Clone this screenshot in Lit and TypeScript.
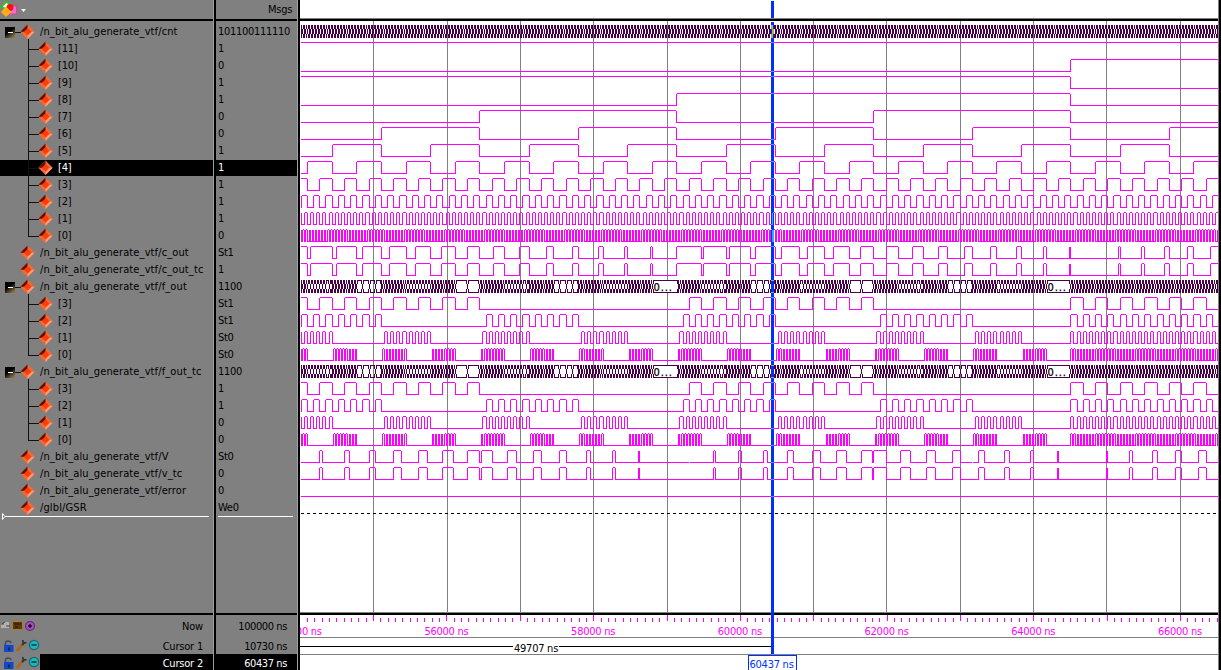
import { LitElement, html, svg, css } from "lit";
import { customElement } from "lit/decorators.js";

type Kind = "bus" | "bit" | "flat" | "undriven";
interface Signal {
  name: string;
  value: string;
  depth: 0 | 1;
  kind: Kind;
  fn?: (n: number) => number;
  last?: boolean;
  selected?: boolean;
}

const ROW = 17;
const ROWS_TOP = 24;
const X_MIN = 301;
const X_MAX = 1218;
const N_START = 2570;
const N_END = 3170;

/** Pixel column at which the counter takes value n. */
const col = (n: number) => Math.floor(1070.86 + (n - 3072) * 1.539);

const signed = (v: number) => (v > 7 ? v - 16 : v);
const split = (n: number) => ({ op: n >> 8, a: (n >> 4) & 15, b: n & 15 });

const fOut = (n: number) => {
  const { op, a, b } = split(n);
  return op === 12 ? ~b & 15 : ~a & b & 15;
};
const carry = (n: number) => {
  const { op, a, b } = split(n);
  if (op === 12) return a + b > 15 ? 1 : 0;
  if (op === 11) return a === 0 || b >= a ? 1 : 0;
  return a === 0 || b > a ? 1 : 0;
};
const overflow = (n: number) => {
  const { op, a, b } = split(n);
  const sa = signed(a);
  const sb = signed(b);
  const r = op === 12 ? sa + sb : op === 11 ? sa - sb - 1 : sa - sb;
  return r > 7 || r < -8 ? 1 : 0;
};
const bit = (f: (n: number) => number, i: number) => (n: number) => (f(n) >> i) & 1;

const T = "/n_bit_alu_generate_vtf/";
const group = (
  name: string,
  value: string,
  fn: (n: number) => number,
  vals: string[],
  selected = -1
): Signal[] => [
  { name: T + name, value, depth: 0, kind: "bus", fn },
  ...vals.map((v, k): Signal => {
    const i = vals.length - 1 - k;
    return {
      name: `[${i}]`, value: v, depth: 1, kind: "bit",
      fn: bit(fn, i), last: i === 0, selected: i === selected,
    };
  }),
];

const SIGNALS: Signal[] = [
  ...group("cnt", "101100111110", (n) => n, ["1", "0", "1", "1", "0", "0", "1", "1", "1", "1", "1", "0"], 4),
  { name: T + "c_out", value: "St1", depth: 0, kind: "bit", fn: carry },
  { name: T + "c_out_tc", value: "1", depth: 0, kind: "bit", fn: carry },
  ...group("f_out", "1100", fOut, ["St1", "St1", "St0", "St0"]),
  ...group("f_out_tc", "1100", fOut, ["1", "1", "0", "0"]),
  { name: T + "V", value: "St0", depth: 0, kind: "bit", fn: overflow },
  { name: T + "v_tc", value: "0", depth: 0, kind: "bit", fn: overflow },
  { name: T + "error", value: "0", depth: 0, kind: "flat" },
  { name: "/glbl/GSR", value: "We0", depth: 0, kind: "undriven" },
];

const changes = (fn: (n: number) => number) => {
  const out: { x: number; v: number }[] = [];
  let prev = fn(N_START);
  for (let n = N_START + 1; n < N_END; n++) {
    const v = fn(n);
    if (v !== prev) {
      out.push({ x: col(n), v });
      prev = v;
    }
  }
  return out;
};

const bitPath = (s: Signal, top: number) => {
  const hi = top + 1;
  const lo = top + 13;
  let d = "";
  let x = X_MIN;
  let v = s.fn!(N_START);
  const run = (from: number, to: number, level: number) => {
    if (to <= from) return;
    d += `M${from} ${(level ? hi : lo) + 0.5}H${to}`;
  };
  for (const c of changes(s.fn!)) {
    if (c.x < X_MIN) { v = c.v; continue; }
    if (c.x >= X_MAX) break;
    run(x, c.x, v);
    d += `M${c.x + 0.5} ${hi + 1}V${lo + 1}`;
    x = c.x + 1;
    v = c.v;
  }
  run(x, X_MAX, v);
  return d;
};

const busPath = (s: Signal, top: number) => {
  const H = 13;
  const W = X_MAX - X_MIN;
  const g: boolean[][] = Array.from({ length: W }, () =>
    Array.from({ length: H }, (_, r) => r === 0 || r === H - 1)
  );
  for (const c of changes(s.fn!)) {
    const x = c.x - X_MIN;
    for (const nx of [x - 1, x + 1]) {
      if (!g[nx]) continue;
      for (let r = 0; r < H; r++) if (r < 4 || r > 8) g[nx][r] = true;
    }
    if (g[x]) for (let r = 0; r < H; r++) g[x][r] = r > 3 && r < 9;
  }
  let d = "";
  g.forEach((column, i) => {
    let start = -1;
    for (let r = 0; r <= H; r++) {
      if (r < H && column[r]) { if (start < 0) start = r; }
      else if (start >= 0) {
        d += `M${X_MIN + i + 0.5} ${top + 1 + start}V${top + 1 + r}`;
        start = -1;
      }
    }
  });
  return d;
};

const GRID = [373, 447, 520, 593, 667, 740, 813, 886, 960, 1033, 1106, 1180];

@customElement("signal-mark")
class SignalMark extends LitElement {
  static properties = { depth: { type: Number }, bus: { type: Boolean }, last: { type: Boolean } };
  declare depth: number;
  declare bus: boolean;
  declare last: boolean;
  static styles = css`
    :host { display: block; flex: none; height: 17px; }
    svg { display: block; }
  `;
  render() {
    const cx = this.depth ? 45.5 : 27.5;
    return html`<svg width=${this.depth ? 58 : 40} height="17">
      ${this.bus
        ? svg`<defs><linearGradient id="g" x1="0" y1="0" x2="0.7" y2="1">
            <stop offset="0.45" stop-color="#000"/><stop offset="1" stop-color="#8a7448"/></linearGradient></defs>
            <path d="M15 8.5H21M28.5 15V17" stroke="#111" shape-rendering="crispEdges"/>
            <rect x="5" y="3" width="10" height="11" fill="url(#g)"/>
            <rect x="8" y="8" width="5" height="1" fill="#fff"/>`
        : null}
      ${this.depth
        ? svg`<path d="M28.5 0V${this.last ? 9 : 17}M28 8.5H39" stroke="#111" fill="none" shape-rendering="crispEdges"/>`
        : null}
      <g transform="translate(${cx} 7.7)">
        <path d="M0 -7.2L7.2 0L0 7.2L-7.2 0Z" fill="#f26a30"/>
        <path d="M0 -7.2V0H-7.2Z" fill="#591208"/>
        <path d="M7.2 0L0 7.2V0Z" fill="#ff9c78"/>
        <path d="M0.2 -3.8L4 0L0.2 3.8L-3.6 0Z" fill="#ff3a0c"/>
      </g>
    </svg>`;
  }
}

@customElement("wave-canvas")
class WaveCanvas extends LitElement {
  static styles = css`
    :host { display: block; width: 921px; height: 670px; background: #fff; }
    svg { display: block; }
    .px { shape-rendering: crispEdges; fill: none; }
    text { font: 11px "DejaVu Sans Condensed", "DejaVu Sans", sans-serif; font-stretch: condensed; }
  `;
  render() {
    const bits: string[] = [];
    const buses: string[] = [];
    SIGNALS.forEach((s, i) => {
      const top = ROWS_TOP + i * ROW;
      if (s.kind === "bit") bits.push(bitPath(s, top));
      if (s.kind === "flat") bits.push(`M${X_MIN} ${top + 13.5}H${X_MAX}`);
      if (s.kind === "bus") buses.push(busPath(s, top));
    });
    const bitD = bits.join("");
    const busD = buses.join("");
    const ticks: string[] = [];
    for (let k = -60; k <= 66; k++) {
      const x = Math.floor(740.4 + k * 7.336);
      if (x >= X_MIN && x < X_MAX) ticks.push(`M${x + 0.5} ${k % 10 ? 618 : 615}V${k % 10 ? 622 : 621}`);
    }
    const labels = [0, 1, 2, 3, 4, 5, 6].map((k) => ({ x: 299.7 + k * 146.7, t: `${54000 + k * 2000} ns` }));
    return html`<svg width="921" height="670" viewBox="300 0 921 670">
      <defs>
        <clipPath id="cur"><rect x="771" y="22" width="3" height="632"/></clipPath>
      </defs>
      <path class="px" stroke="#808080" d=${GRID.map((x) => `M${x + 0.5} 21V612`).join("")}></path>
      ${[279, 364].map((y) => [653, 1047].map((x) => svg`
        <rect x=${x} y=${y + 1} width=${x === 653 ? 24 : 22} height="12" fill="#fff"/>
        <text x=${x + 0.5} y=${y + 12} fill="#000" stroke="#000" stroke-width="0.25" textLength="18">0...</text>`))}
      <path class="px" stroke="#ff00ff" d=${bitD}></path>
      <path class="px" stroke="#fff" d="M689.5 462V463M972.5 462V463"></path>
      <path class="px" stroke="#480048" d=${busD}></path>
      <path class="px" stroke="#000" stroke-dasharray="3 3" d="M301 513.5H1218"></path>
      <rect x="300" y="18" width="918" height="1" fill="#808080"/>
      <rect x="300" y="19" width="918" height="2" fill="#000"/>
      <rect x="300" y="612" width="918" height="1" fill="#808080"/>
      <rect x="300" y="613" width="918" height="2" fill="#000"/>
      <path class="px" stroke="#ff00ff" d=${ticks.join("")}></path>
      ${labels.map((l) => svg`<text x=${l.x} y="635" fill="#ff00ff" text-anchor="middle" textLength="44">${l.t}</text>`)}
      <path class="px" stroke="#808080" d="M300 637.5H1218M300 654.5H1218"></path>
      <path class="px" stroke="#000" d="M300 646.5H513M559 646.5H772"></path>
      <text x="536" y="652" text-anchor="middle" textLength="44">49707 ns</text>
      <rect x="771" y="1" width="3" height="17" fill="#0030ff"/>
      <rect x="771" y="22" width="3" height="632" fill="#0030ff"/>
      <g clip-path="url(#cur)">
        <path class="px" stroke="#00c8e8" d=${bitD}></path>
        <path class="px" stroke="#a4b848" d=${busD}></path>
      </g>
      <rect x="748.5" y="655.5" width="48" height="16" fill="#fff" stroke="#0030ff"/>
      <text x="771.5" y="668" fill="#0030ff" text-anchor="middle" textLength="44">60437 ns</text>
      <rect x="1218" y="0" width="1" height="670" fill="#808080"/>
      <rect x="1219" y="0" width="2" height="670" fill="#000"/>
    </svg>`;
  }
}

const cursorIcons = html`<svg width="40" height="16">
  <path d="M5.5 8.5V6Q5.5 4 8 4Q10.6 4 11 6" fill="none" stroke="#3c4c66" stroke-width="1.5"/>
  <rect x="4" y="8" width="9.5" height="7" fill="#1446c8"/>
  <path d="M8 10.5h2v3h-2z" fill="#0a2470"/>
  <path d="M17.5 13L22.5 7.5" stroke="#a86a1c" stroke-width="3" stroke-linecap="round"/>
  <path d="M22 8L24.5 5.5M23 3Q22 7 26.5 5.5" stroke="#303438" stroke-width="1.8" fill="none"/>
  <circle cx="34" cy="8" r="4.6" fill="#20b4bc" stroke="#126a74" stroke-width="1.2"/>
  <path d="M31.5 8H36.5" stroke="#083c44" stroke-width="1.6"/>
</svg>`;

@customElement("app-root")
class AppRoot extends LitElement {
  static styles = css`
    :host {
      display: flex; width: 1221px; height: 670px; overflow: hidden; background: #000;
      font: 11px/15px "DejaVu Sans Condensed", "DejaVu Sans", sans-serif;
      font-stretch: condensed; letter-spacing: -0.3px; color: #000;
    }
    .pane {
      display: flex; flex-direction: column; box-sizing: border-box; background: #808080;
      border-right: 1px solid #a0a0a0;
    }
    .names { width: 214px; margin-right: 2px; }
    .values { width: 82px; margin-right: 2px; }
    .head {
      display: flex; align-items: center; box-sizing: border-box; height: 21px; flex: none;
      border-bottom: 2px solid #000;
    }
    .values .head { justify-content: flex-end; padding-right: 5px; }
    .rows { padding-top: 3px; flex: 1; }
    .row { display: flex; height: 17px; white-space: nowrap; }
    .values .row { padding-left: 2px; }
    .path { letter-spacing: 0.12px; }
    .sel { background: #000; color: #fff; box-shadow: inset 0 -1px #808080; }
    .end { display: block; margin-top: -5px; }
    .foot { flex: none; height: 57px; box-sizing: border-box; border-top: 2px solid #000; }
    .line { display: flex; justify-content: space-between; box-sizing: border-box; padding-right: 10px; }
    .now { height: 22px; line-height: 23px; }
    .c1 { height: 17px; line-height: 19px; }
    .c2 { height: 16px; line-height: 19px; color: #fff; background: #000; }
    .c2 svg { background: #808080; }
    .names span { letter-spacing: -0.2px; }
    .names .path { letter-spacing: 0.12px; }
    .values .line { justify-content: flex-end; }
    .values .line span { letter-spacing: -0.4px; }
    .line svg { display: block; }
    .now svg { margin-top: 3px; }
  `;
  render() {
    return html`
      <div class="pane names">
        <div class="head">
          <svg width="30" height="19">
            <path d="M1.5 7L6 2L10 4L6 9Z" fill="#fff" stroke="#28c818" stroke-width="1.8"/>
            <rect x="9.5" y="6" width="7" height="8" fill="#f070c8" stroke="#e838b0"/>
            <circle cx="10" cy="7.5" r="3.4" fill="#f81010"/>
            <path d="M6 6.5L11.5 12L6 17L0.8 12Z" fill="#ffac18"/>
            <path d="M21 9H26L23.5 12Z" fill="#fff"/>
          </svg>
        </div>
        <div class="rows">
          ${SIGNALS.map((s) => html`<div class="row ${s.selected ? "sel" : ""}">
            <signal-mark .depth=${s.depth} .bus=${s.kind === "bus"} .last=${!!s.last}></signal-mark>
            <span class=${s.depth ? "" : "path"}>${s.name}</span>
          </div>`)}
          <svg class="end" width="213" height="9">
            <rect x="5" y="4" width="204" height="1" fill="#fff"/>
            <path d="M2.5 1.5V7.5L5 4.5Z" fill="#808080" stroke="#fff"/>
          </svg>
        </div>
        <div class="foot">
          <div class="line now">
            <svg width="36" height="16">
              <path d="M1 10V7H4V4H9V10Z" fill="#b4b4ac"/><path d="M2 6L5 4M6 8H10" stroke="#40404a"/>
              <rect x="12.5" y="3.5" width="10" height="8" fill="#5c3810" stroke="#b07820"/>
              <path d="M14 6H21M15 9H18" stroke="#201408"/>
              <circle cx="30" cy="8" r="4.4" fill="#a850c0" stroke="#682880" stroke-width="1.2"/>
              <path d="M28 8H32M30 6V10" stroke="#200828" stroke-width="1.4"/>
            </svg>
            <span>Now</span>
          </div>
          <div class="line c1">${cursorIcons}<span>Cursor 1</span></div>
          <div class="line c2">${cursorIcons}<span>Cursor 2</span></div>
        </div>
      </div>
      <div class="pane values">
        <div class="head"><span>Msgs</span></div>
        <div class="rows">
          ${SIGNALS.map((s) => html`<div class="row ${s.selected ? "sel" : ""}"><span>${s.value}</span></div>`)}
          <svg class="end" width="80" height="9"><rect x="2" y="4" width="75" height="1" fill="#fff"/></svg>
        </div>
        <div class="foot">
          <div class="line now"><span>100000 ns</span></div>
          <div class="line c1"><span>10730 ns</span></div>
          <div class="line c2"><span>60437 ns</span></div>
        </div>
      </div>
      <wave-canvas></wave-canvas>
    `;
  }
}
